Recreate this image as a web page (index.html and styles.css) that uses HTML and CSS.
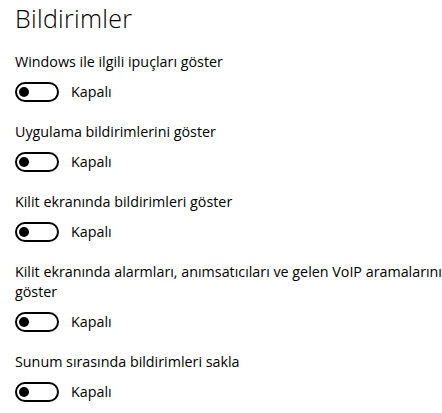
FILE: index.html
```html
<!DOCTYPE html>
<html lang="tr">
	<head>
		<meta charset="UTF-8">
		<title>Bildirimler</title>
		<link rel="stylesheet" href="styles.css">
	</head>
	<body>
		<div class="page">
			<h1 class="title">Bildirimler</h1>

			<div class="setting">
				<p class="label">Windows ile ilgili ipuçları göster</p>
				<div class="toggle-row">
					<span class="toggle"><span class="knob"></span></span>
					<span class="state">Kapalı</span>
				</div>
			</div>

			<div class="setting">
				<p class="label">Uygulama bildirimlerini göster</p>
				<div class="toggle-row">
					<span class="toggle"><span class="knob"></span></span>
					<span class="state">Kapalı</span>
				</div>
			</div>

			<div class="setting">
				<p class="label">Kilit ekranında bildirimleri göster</p>
				<div class="toggle-row">
					<span class="toggle"><span class="knob"></span></span>
					<span class="state">Kapalı</span>
				</div>
			</div>

			<div class="setting">
				<p class="label">Kilit ekranında alarmları, anımsatıcıları ve gelen VoIP aramalarını göster</p>
				<div class="toggle-row">
					<span class="toggle"><span class="knob"></span></span>
					<span class="state">Kapalı</span>
				</div>
			</div>

			<div class="setting">
				<p class="label">Sunum sırasında bildirimleri sakla</p>
				<div class="toggle-row">
					<span class="toggle"><span class="knob"></span></span>
					<span class="state">Kapalı</span>
				</div>
			</div>
		</div>
	</body>
</html>
```
FILE: styles.css
```css
* {
	margin: 0;
	padding: 0;
	box-sizing: border-box;
}

body {
	background-color: #fff;
	color: #000;
	font-family: "Open Sans", "Noto Sans", sans-serif;
	font-size: 14.3px;
}

.page {
	padding: 3px 0 0 15px;
	width: 442px;
}

.title {
	font-size: 25px;
	font-weight: 300;
	line-height: 30px;
	letter-spacing: 0.3px;
	margin-bottom: 18px;
}

.setting {
	margin-bottom: 19px;
}

.label {
	line-height: 20px;
	padding-top: 1px;
	margin-bottom: 10px;
}

.toggle-row {
	display: flex;
	align-items: center;
	gap: 12px;
	height: 20px;
}

.toggle {
	display: flex;
	align-items: center;
	width: 44px;
	height: 20px;
	border: 2px solid #000;
	border-radius: 10px;
	padding-left: 2px;
}

.knob {
	width: 10px;
	height: 10px;
	border-radius: 50%;
	background-color: #000;
}

.state {
	line-height: 20px;
}
```
